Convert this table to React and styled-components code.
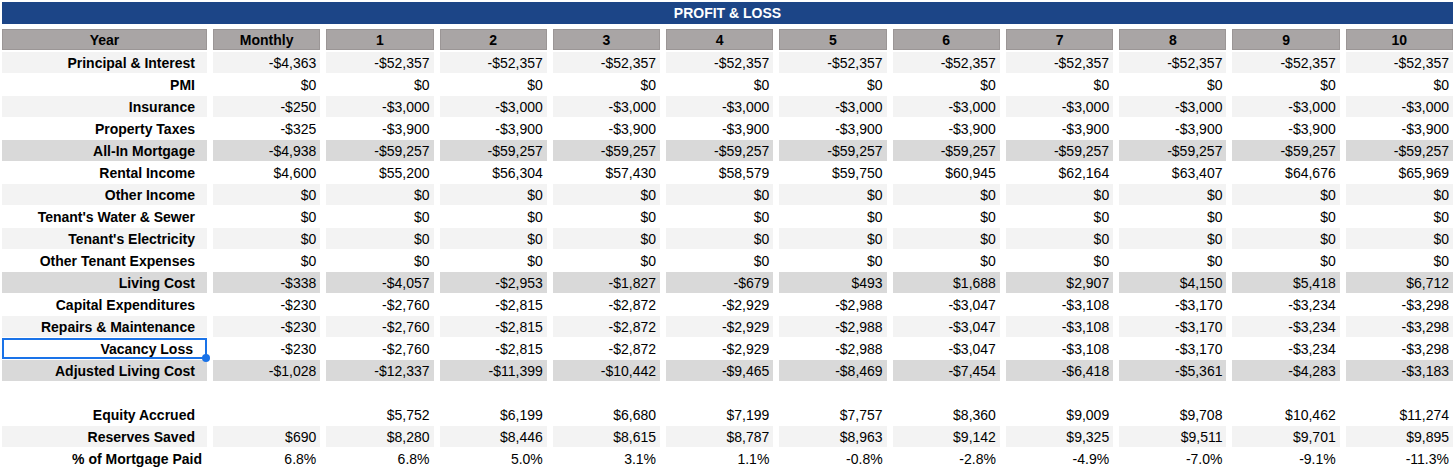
import styled, { createGlobalStyle } from "styled-components";

const GlobalStyle = createGlobalStyle`
  body {
    margin: 0;
    background: #ffffff;
    font-family: "Liberation Sans", Arial, sans-serif;
    color: #000000;
  }
`;

const Sheet = styled.div`
  width: 1451px;
  padding: 2px 0 0 2px;
  display: flex;
  flex-direction: column;
`;

const TitleBar = styled.div`
  height: 22px;
  background: #1c4587;
  color: #ffffff;
  font-weight: 700;
  font-size: 14px;
  display: flex;
  align-items: center;
  justify-content: center;
  margin-bottom: 5px;
`;

const Row = styled.div`
  display: grid;
  grid-template-columns: 205px repeat(11, 1fr);
  column-gap: 6px;
  height: 22px;
`;

const fills = {
  light: "#f3f3f3",
  dark: "#d9d9d9",
  none: "transparent",
};

const HeadCell = styled.div`
  background: #a9a5a5;
  border: 1px solid #9b9696;
  font-weight: 700;
  font-size: 14px;
  display: flex;
  align-items: center;
  justify-content: center;
  height: 21px;
  box-sizing: border-box;
`;

const Cell = styled.div`
  position: relative;
  background: ${(p) => fills[p.$fill]};
  font-size: 14px;
  display: flex;
  align-items: center;
  justify-content: flex-end;
  padding-right: 4px;
  margin-top: 1px;
  height: 21px;
  box-sizing: border-box;
  white-space: nowrap;
`;

const LabelCell = styled(Cell)`
  font-weight: 700;
  padding-right: ${(p) => (p.$wide ? "5px" : "12px")};
  border: ${(p) => (p.$selected ? "2px solid #1a73e8" : "none")};
`;

const Handle = styled.span`
  position: absolute;
  right: -5px;
  bottom: -5px;
  width: 8px;
  height: 8px;
  border-radius: 50%;
  background: #1a73e8;
  z-index: 2;
`;

const same = (first, rest) => [first, ...Array(10).fill(rest)];
const zeros = Array(11).fill("$0");
const expenses = [
  "-$230", "-$2,760", "-$2,815", "-$2,872", "-$2,929", "-$2,988",
  "-$3,047", "-$3,108", "-$3,170", "-$3,234", "-$3,298",
];

const rows = [
  { label: "Principal & Interest", fill: "light", values: same("-$4,363", "-$52,357") },
  { label: "PMI", fill: "none", values: zeros },
  { label: "Insurance", fill: "light", values: same("-$250", "-$3,000") },
  { label: "Property Taxes", fill: "none", values: same("-$325", "-$3,900") },
  { label: "All-In Mortgage", fill: "dark", values: same("-$4,938", "-$59,257") },
  {
    label: "Rental Income",
    fill: "none",
    values: ["$4,600", "$55,200", "$56,304", "$57,430", "$58,579", "$59,750", "$60,945", "$62,164", "$63,407", "$64,676", "$65,969"],
  },
  { label: "Other Income", fill: "light", values: zeros },
  { label: "Tenant's Water & Sewer", fill: "none", values: zeros },
  { label: "Tenant's Electricity", fill: "light", values: zeros },
  { label: "Other Tenant Expenses", fill: "none", values: zeros },
  {
    label: "Living Cost",
    fill: "dark",
    values: ["-$338", "-$4,057", "-$2,953", "-$1,827", "-$679", "$493", "$1,688", "$2,907", "$4,150", "$5,418", "$6,712"],
  },
  { label: "Capital Expenditures", fill: "none", values: expenses },
  { label: "Repairs & Maintenance", fill: "light", values: expenses },
  { label: "Vacancy Loss", fill: "none", values: expenses, selected: true },
  {
    label: "Adjusted Living Cost",
    fill: "dark",
    values: ["-$1,028", "-$12,337", "-$11,399", "-$10,442", "-$9,465", "-$8,469", "-$7,454", "-$6,418", "-$5,361", "-$4,283", "-$3,183"],
  },
  { label: "", fill: "none", values: Array(11).fill("") },
  {
    label: "Equity Accrued",
    fill: "none",
    values: ["", "$5,752", "$6,199", "$6,680", "$7,199", "$7,757", "$8,360", "$9,009", "$9,708", "$10,462", "$11,274"],
  },
  {
    label: "Reserves Saved",
    fill: "light",
    values: ["$690", "$8,280", "$8,446", "$8,615", "$8,787", "$8,963", "$9,142", "$9,325", "$9,511", "$9,701", "$9,895"],
  },
  {
    label: "% of Mortgage Paid",
    fill: "none",
    wide: true,
    values: ["6.8%", "6.8%", "5.0%", "3.1%", "1.1%", "-0.8%", "-2.8%", "-4.9%", "-7.0%", "-9.1%", "-11.3%"],
  },
];

const headers = ["Year", "Monthly", "1", "2", "3", "4", "5", "6", "7", "8", "9", "10"];

export default function App() {
  return (
    <>
      <GlobalStyle />
      <Sheet>
        <TitleBar>PROFIT &amp; LOSS</TitleBar>
        <Row>
          {headers.map((h) => (
            <HeadCell key={h}>{h}</HeadCell>
          ))}
        </Row>
        {rows.map((row, i) => (
          <Row key={i}>
            <LabelCell $fill={row.fill} $wide={row.wide} $selected={row.selected}>
              {row.label}
              {row.selected && <Handle />}
            </LabelCell>
            {row.values.map((v, j) => (
              <Cell key={j} $fill={row.fill}>
                {v}
              </Cell>
            ))}
          </Row>
        ))}
      </Sheet>
    </>
  );
}
